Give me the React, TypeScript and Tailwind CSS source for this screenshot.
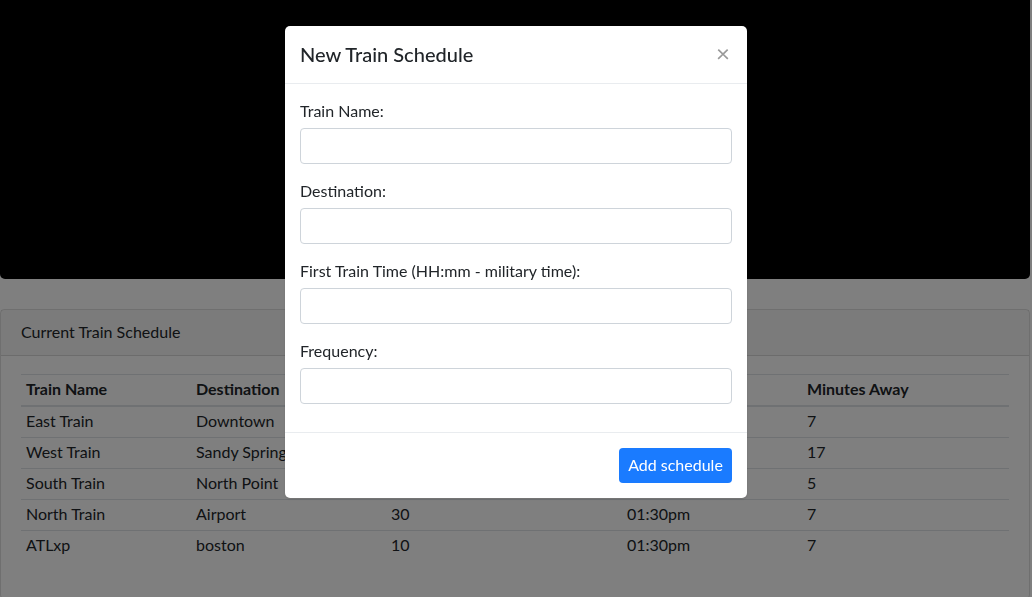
const rows = [
  { name: 'East Train', dest: 'Downtown', freq: '30', next: '01:30pm', away: '7' },
  { name: 'West Train', dest: 'Sandy Springs', freq: '20', next: '01:40pm', away: '17' },
  { name: 'South Train', dest: 'North Point', freq: '15', next: '01:28pm', away: '5' },
  { name: 'North Train', dest: 'Airport', freq: '30', next: '01:30pm', away: '7' },
  { name: 'ATLxp', dest: 'boston', freq: '10', next: '01:30pm', away: '7' },
]

const fields = ['Train Name:', 'Destination:', 'First Train Time (HH:mm - military time):', 'Frequency:']

const font = { fontFamily: 'Lato, "Noto Sans", sans-serif' }

export default function App() {
  return (
    <div className="relative min-h-screen bg-white text-[#212529] text-[16px] leading-6" style={font}>
      {/* jumbotron */}
      <div className="h-[279px] bg-black rounded-b-[5px] mr-[2px]" />

      {/* schedule card */}
      <div className="mt-[30px] mr-[2px] border border-black/[.125] rounded-[4px]">
        <div className="h-[46px] flex items-center px-5 bg-black/[.03] border-b border-black/[.125]">
          <span className="-mt-[1px]">Current Train Schedule</span>
        </div>
        <div className="px-5 pt-[18px] pb-[37px]">
          <table className="w-full border-collapse text-left">
            <thead>
              <tr className="border-t border-[#dee2e6] border-b-2">
                <th className="w-[170px] px-[5px] pt-[2px] pb-[4px] font-bold">Train Name</th>
                <th className="w-[195px] px-[5px] pt-[2px] pb-[4px] font-bold">Destination</th>
                <th className="w-[236px] px-[5px] pt-[2px] pb-[4px] font-bold">Frequency (min)</th>
                <th className="w-[180px] px-[5px] pt-[2px] pb-[4px] font-bold">Next Arrival</th>
                <th className="px-[5px] pt-[2px] pb-[4px] font-bold">Minutes Away</th>
              </tr>
            </thead>
            <tbody>
              {rows.map((r) => (
                <tr key={r.name} className="border-t border-[#dee2e6]">
                  <td className="px-[5px] pt-[2px] pb-[4px]">{r.name}</td>
                  <td className="px-[5px] pt-[2px] pb-[4px]">{r.dest}</td>
                  <td className="px-[5px] pt-[2px] pb-[4px]">{r.freq}</td>
                  <td className="px-[5px] pt-[2px] pb-[4px]">{r.next}</td>
                  <td className="px-[5px] pt-[2px] pb-[4px]">{r.away}</td>
                </tr>
              ))}
            </tbody>
          </table>
        </div>
      </div>

      {/* modal */}
      <div className="fixed inset-0 bg-black/50">
        <div className="mx-auto mt-[26px] w-[462px] bg-white rounded-[5px] shadow">
          <div className="h-[58px] px-[15px] flex items-center justify-between border-b border-[#e9ecef]">
            <h5 className="text-[20px] leading-[30px] font-medium -mt-[2px]">New Train Schedule</h5>
            <span className="text-[#9a9a9a] text-[24px] leading-none pr-[2px] -mt-[3px]">×</span>
          </div>
          <div className="px-[15px] pt-[16px] pb-[12px]">
            {fields.map((f) => (
              <div key={f} className="mb-4">
                <label className="block leading-[21px] mb-[7px]">{f}</label>
                <div className="h-[36px] border border-[#ced4da] rounded-[4px]" />
              </div>
            ))}
          </div>
          <div className="h-[66px] px-[15px] flex items-center justify-end border-t border-[#e9ecef]">
            <button className="h-[35px] w-[113px] rounded-[4px] bg-[#1a7bff] text-white leading-[33px] pb-[2px]">Add schedule</button>
          </div>
        </div>
      </div>
    </div>
  )
}
